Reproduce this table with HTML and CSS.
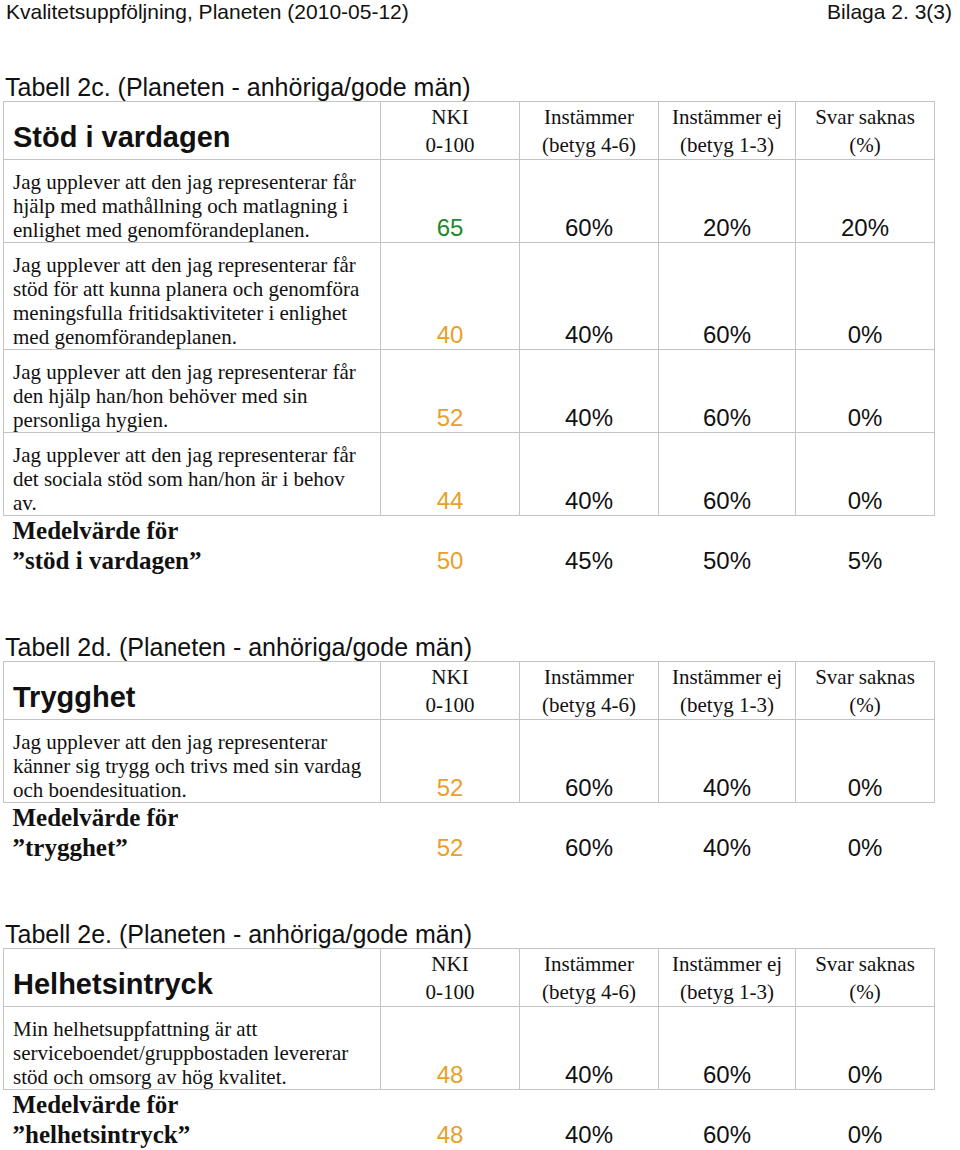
FILE: index.html
```html
<!DOCTYPE html>
<html lang="sv">
<head>
<meta charset="utf-8">
<title>Kvalitetsuppföljning, Planeten</title>
<link rel="stylesheet" href="styles.css">
</head>
<body>
<header class="page-head">
  <span>Kvalitetsuppföljning, Planeten (2010-05-12)</span>
  <span>Bilaga 2. 3(3)</span>
</header>

<section class="block first">
  <h2 class="caption">Tabell 2c. (Planeten - anhöriga/gode män)</h2>
  <table class="grid">
    <colgroup><col class="c-q"><col class="c-n"><col class="c-n"><col class="c-n2"><col class="c-n"></colgroup>
    <thead>
      <tr>
        <th class="topic">Stöd i vardagen</th>
        <th>NKI<br>0-100</th>
        <th>Instämmer<br>(betyg 4-6)</th>
        <th>Instämmer ej<br>(betyg 1-3)</th>
        <th>Svar saknas<br>(%)</th>
      </tr>
    </thead>
    <tbody>
      <tr>
        <td class="q">Jag upplever att den jag representerar får<br>hjälp med mathållning och matlagning i<br>enlighet med genomförandeplanen.</td>
        <td class="v green">65</td><td class="v">60%</td><td class="v">20%</td><td class="v">20%</td>
      </tr>
      <tr>
        <td class="q">Jag upplever att den jag representerar får<br>stöd för att kunna planera och genomföra<br>meningsfulla fritidsaktiviteter i enlighet<br>med genomförandeplanen.</td>
        <td class="v orange">40</td><td class="v">40%</td><td class="v">60%</td><td class="v">0%</td>
      </tr>
      <tr>
        <td class="q">Jag upplever att den jag representerar får<br>den hjälp han/hon behöver med sin<br>personliga hygien.</td>
        <td class="v orange">52</td><td class="v">40%</td><td class="v">60%</td><td class="v">0%</td>
      </tr>
      <tr>
        <td class="q">Jag upplever att den jag representerar får<br>det sociala stöd som han/hon är i behov<br>av.</td>
        <td class="v orange">44</td><td class="v">40%</td><td class="v">60%</td><td class="v">0%</td>
      </tr>
      <tr class="avg">
        <td class="q">Medelvärde för<br>”stöd i vardagen”</td>
        <td class="v orange">50</td><td class="v">45%</td><td class="v">50%</td><td class="v">5%</td>
      </tr>
    </tbody>
  </table>
</section>

<section class="block">
  <h2 class="caption">Tabell 2d. (Planeten - anhöriga/gode män)</h2>
  <table class="grid">
    <colgroup><col class="c-q"><col class="c-n"><col class="c-n"><col class="c-n2"><col class="c-n"></colgroup>
    <thead>
      <tr>
        <th class="topic">Trygghet</th>
        <th>NKI<br>0-100</th>
        <th>Instämmer<br>(betyg 4-6)</th>
        <th>Instämmer ej<br>(betyg 1-3)</th>
        <th>Svar saknas<br>(%)</th>
      </tr>
    </thead>
    <tbody>
      <tr>
        <td class="q">Jag upplever att den jag representerar<br>känner sig trygg och trivs med sin vardag<br>och boendesituation.</td>
        <td class="v orange">52</td><td class="v">60%</td><td class="v">40%</td><td class="v">0%</td>
      </tr>
      <tr class="avg">
        <td class="q">Medelvärde för<br>”trygghet”</td>
        <td class="v orange">52</td><td class="v">60%</td><td class="v">40%</td><td class="v">0%</td>
      </tr>
    </tbody>
  </table>
</section>

<section class="block">
  <h2 class="caption">Tabell 2e. (Planeten - anhöriga/gode män)</h2>
  <table class="grid">
    <colgroup><col class="c-q"><col class="c-n"><col class="c-n"><col class="c-n2"><col class="c-n"></colgroup>
    <thead>
      <tr>
        <th class="topic">Helhetsintryck</th>
        <th>NKI<br>0-100</th>
        <th>Instämmer<br>(betyg 4-6)</th>
        <th>Instämmer ej<br>(betyg 1-3)</th>
        <th>Svar saknas<br>(%)</th>
      </tr>
    </thead>
    <tbody>
      <tr>
        <td class="q">Min helhetsuppfattning är att<br>serviceboendet/gruppbostaden levererar<br>stöd och omsorg av hög kvalitet.</td>
        <td class="v orange">48</td><td class="v">40%</td><td class="v">60%</td><td class="v">0%</td>
      </tr>
      <tr class="avg">
        <td class="q">Medelvärde för<br>”helhetsintryck”</td>
        <td class="v orange">48</td><td class="v">40%</td><td class="v">60%</td><td class="v">0%</td>
      </tr>
    </tbody>
  </table>
</section>
</body>
</html>
```

FILE: styles.css
```css
html, body {
  margin: 0;
  padding: 0;
  background: #fff;
  color: #111;
}

body {
  width: 960px;
  font-family: "Liberation Sans", Arial, sans-serif;
}

.page-head {
  display: flex;
  justify-content: space-between;
  padding: 0 8px 0 6px;
  font-size: 21px;
  line-height: 24px;
}

.block {
  margin-top: 58px;
}

.block.first {
  margin-top: 50px;
}

.caption {
  margin: 0 0 0 5px;
  font-weight: normal;
  font-size: 25px;
  line-height: 27px;
}

.grid {
  margin-left: 3px;
  width: 932px;
  border-collapse: collapse;
  table-layout: fixed;
}

.c-q { width: 377px; }
.c-n { width: 139px; }
.c-n2 { width: 137px; }

.grid th,
.grid td {
  border: 1px solid #c4c4c4;
  padding: 0;
  vertical-align: bottom;
}

.grid th {
  height: 55px;
  font-family: "Liberation Serif", "Times New Roman", serif;
  font-weight: normal;
  font-size: 21px;
  line-height: 28px;
  text-align: center;
}

.grid th.topic {
  text-align: left;
  padding-left: 9px;
  font-family: "Liberation Sans", Arial, sans-serif;
  font-weight: bold;
  font-size: 29px;
  line-height: 40px;
  padding-bottom: 2px;
}

.grid td.q {
  padding: 10px 0 0 9px;
  font-family: "Liberation Serif", "Times New Roman", serif;
  font-size: 21px;
  line-height: 24px;
}

.grid td.v {
  text-align: center;
  font-size: 24px;
  line-height: 24px;
  padding-bottom: 2px;
}

.green { color: #23892a; }
.orange { color: #e8a02a; }

.grid tr.avg td {
  border: none;
  padding-top: 0;
}

.grid tr.avg td.q {
  font-weight: bold;
  font-size: 25px;
  line-height: 30px;
  padding-bottom: 0;
}

.grid tr.avg td.v {
  line-height: 30px;
  padding-bottom: 0;
}
```
